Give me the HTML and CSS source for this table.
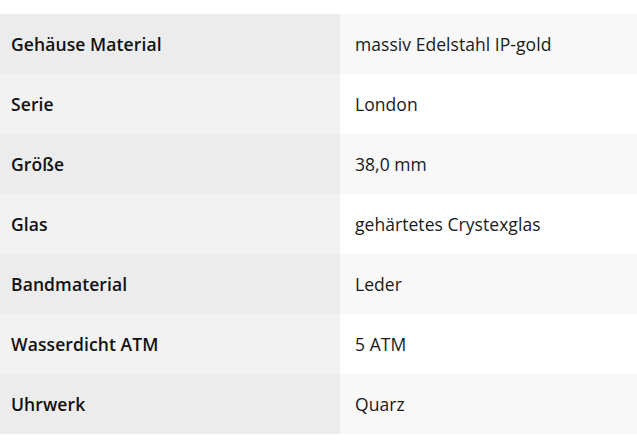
FILE: index.html
```html
<!DOCTYPE html>
<html lang="de">
<head>
<meta charset="utf-8">
<link rel="stylesheet" href="styles.css">
</head>
<body>
<table class="specs">
  <tr><th>Gehäuse Material</th><td>massiv Edelstahl IP-gold</td></tr>
  <tr><th>Serie</th><td>London</td></tr>
  <tr><th>Größe</th><td>38,0 mm</td></tr>
  <tr><th>Glas</th><td>gehärtetes Crystexglas</td></tr>
  <tr><th>Bandmaterial</th><td>Leder</td></tr>
  <tr><th>Wasserdicht ATM</th><td>5 ATM</td></tr>
  <tr><th>Uhrwerk</th><td>Quarz</td></tr>
</table>
</body>
</html>
```
FILE: styles.css
```css
html, body { margin: 0; padding: 0; background: #fff; }
body { padding-top: 14px; font-family: "Open Sans", sans-serif; }
.specs { border-collapse: collapse; width: 637px; }
.specs th, .specs td { height: 60px; padding: 0 0 1px 11px; text-align: left; box-sizing: border-box; }
.specs th { width: 340px; font-size: 17.5px; font-weight: 600; color: #111; background: #ececec; letter-spacing: 0.1px; }
.specs td { padding-left: 15px; font-size: 17.5px; font-weight: 400; color: #1a1a1a; background: #f8f8f8; letter-spacing: 0.05px; }
.specs tr:nth-child(even) th { background: #f2f2f2; }
.specs tr:nth-child(even) td { background: #fff; }
```
